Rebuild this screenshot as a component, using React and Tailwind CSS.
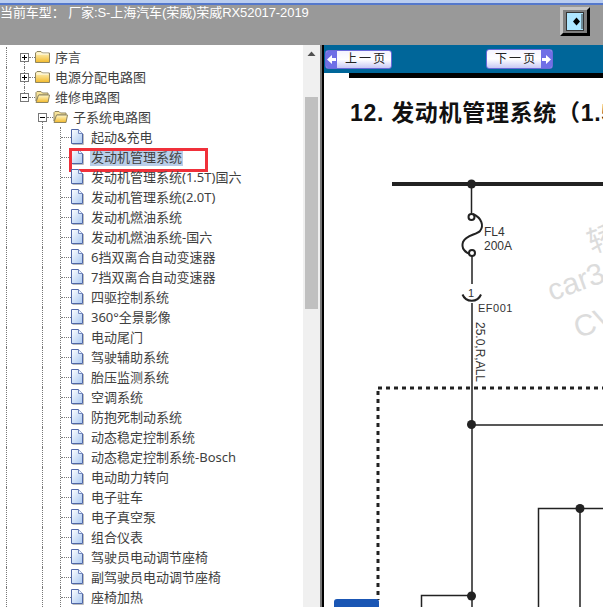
import React from 'react';

const cjk = { fontFamily: '"Noto Sans", "Noto Sans CJK SC", sans-serif' };

const leaves = [
  '起动&充电', '发动机管理系统', '发动机管理系统(1.5T)国六', '发动机管理系统(2.0T)', '发动机燃油系统',
  '发动机燃油系统-国六', '6挡双离合自动变速器', '7挡双离合自动变速器', '四驱控制系统', '360°全景影像',
  '电动尾门', '驾驶辅助系统', '胎压监测系统', '空调系统', '防抱死制动系统', '动态稳定控制系统',
  '动态稳定控制系统-Bosch', '电动助力转向', '电子驻车', '电子真空泵', '组合仪表', '驾驶员电动调节座椅',
  '副驾驶员电动调节座椅', '座椅加热',
];

function FolderIcon({ open }) {
  return (
    <svg width="15" height="14" viewBox="0 0 15 14" className="shrink-0">
      <defs>
        <linearGradient id="fold" x1="0" y1="0" x2="0" y2="1">
          <stop offset="0" stopColor="#fff8cc" />
          <stop offset="1" stopColor="#f2b92a" />
        </linearGradient>
      </defs>
      {open ? (
        <>
          <path d="M1 11V2.5L2 1.5H6L7.5 3H13V5H4L1 11Z" fill="#f8e49a" stroke="#8f8560" />
          <path d="M1 12.5L3.5 5H14.5L13 12.5Z" fill="url(#fold)" stroke="#8f8560" />
        </>
      ) : (
        <>
          <path d="M0.5 3L2 1.5H6L7.5 3H14.5V12.5H0.5Z" fill="url(#fold)" stroke="#8f8560" />
          <path d="M1.5 4H13.5" stroke="#fffdf0" />
        </>
      )}
    </svg>
  );
}

function DocIcon() {
  return (
    <svg width="13" height="16" viewBox="0 0 13 16" className="shrink-0">
      <defs>
        <linearGradient id="doc" x1="0" y1="0" x2="1" y2="1">
          <stop offset="0" stopColor="#ffffff" />
          <stop offset="1" stopColor="#a9c8f2" />
        </linearGradient>
      </defs>
      <path d="M1.5 15.5H12.5V5" fill="none" stroke="#bdbdbd" />
      <path d="M0.5 0.5H7.5L11.5 4.5V14.5H0.5Z" fill="url(#doc)" stroke="#4f66a6" />
      <path d="M7.5 0.5V4.5H11.5" fill="#e8f0fb" stroke="#7487bd" />
    </svg>
  );
}

function Expander({ open, line }) {
  return (
    <span className="relative flex h-full w-[9px] shrink-0 items-center">
      {line === 'both' && <span className="absolute inset-y-0 left-[4px] border-l border-dotted border-[#777]" />}
      {line === 'top' && <span className="absolute left-[4px] top-0 h-1/2 border-l border-dotted border-[#777]" />}
      {line === 'bottom' && <span className="absolute bottom-0 left-[4px] h-1/2 border-l border-dotted border-[#777]" />}
      <span className="relative flex h-[9px] w-[9px] items-center justify-center border border-[#777] bg-white">
        <span className="h-px w-[5px] bg-black" />
        {!open && <span className="absolute h-[5px] w-px bg-black" />}
      </span>
    </span>
  );
}

function FolderRow({ label, open, level, line }) {
  return (
    <div className="flex h-5 items-center pl-[6px]">
      <span className={`h-full shrink-0 border-l border-dotted border-[#777] ${level === 1 ? 'w-[14px]' : 'w-[32px]'}`} />
      <Expander open={open} line={line} />
      <span className="w-[6px] shrink-0 border-t border-dotted border-[#777]" />
      <FolderIcon open={open} />
      <span className="ml-[5px] whitespace-nowrap pb-px text-[13px] leading-[16px] text-[#3f3f3f]">{label}</span>
    </div>
  );
}

function LeafRow({ label, selected }) {
  return (
    <div className="relative flex h-5 items-center pl-[6px]">
      <span className="h-full w-[36px] shrink-0 border-l border-dotted border-[#777]" />
      <span className="h-full w-[18px] shrink-0 border-l border-dotted border-[#777]" />
      <span className="flex h-full w-[11px] shrink-0 items-center border-l border-dotted border-[#777]">
        <span className="w-full border-t border-dotted border-[#777]" />
      </span>
      <DocIcon />
      <span className={`ml-[6px] whitespace-nowrap px-px pb-px text-[13px] leading-[16px] text-[#3f3f3f] ${selected ? 'bg-[#b9cee9]' : ''}`}>
        {label}
      </span>
      {selected && <span className="absolute left-[69px] top-px h-[24px] w-[139px] border-[3px] border-[#f0303a]" />}
    </div>
  );
}

function PageButton({ label, next }) {
  const cap = (
    <span className="flex h-full w-[11px] shrink-0 items-center justify-center bg-[#6f6fe6]">
      <svg width="9" height="9" viewBox="0 0 9 9">
        <path d={next ? 'M0 3H4V0L9 4.5L4 9V6H0Z' : 'M9 3H5V0L0 4.5L5 9V6H9Z'} fill="#fff" />
      </svg>
    </span>
  );
  return (
    <div className={`flex w-[67px] items-center overflow-hidden rounded-[3px] border border-[#6a6ad8] bg-gradient-to-b from-[#f4f4ff] via-white to-[#c8c8f4] ${next ? 'h-[20px]' : 'h-[19px]'}`}>
      {!next && cap}
      <span className={`flex-1 whitespace-nowrap text-[12px] leading-none tracking-[-0.5px] text-[#222] ${next ? 'pl-[8px]' : 'pl-[8px]'}`}>{label}</span>
      {next && cap}
    </div>
  );
}

function Diagram() {
  const txt = { fontFamily: '"Liberation Sans", sans-serif' };
  return (
    <svg width="279" height="462" viewBox="324 145 279 462" className="absolute left-0 top-[72px]">
      <g fill="#dcdcdc" transform="rotate(-20 575 280)" style={txt}>
        <text x="546" y="292" fontSize="30">car3</text>
        <text x="558" y="336" fontSize="30">CV</text>
        <text x="600" y="261" fontSize="30" style={cjk}>轿</text>
      </g>
      <g stroke="#222" fill="none">
        <path d="M392 184H603" strokeWidth="4" />
        <path d="M471.5 184V214M472 256V284M472 303V607M472 425H603M421.5 607V595.5H472M538.5 607V508.5H603M580 508V607" strokeWidth="1.5" />
        <path d="M473 214C482 218 484 226 480 231C476 235 466 235 463 242C461 248 465 253 471 254" strokeWidth="2" />
        <circle cx="471.5" cy="217" r="3" fill="#fff" strokeWidth="2" />
        <circle cx="472" cy="253" r="3" fill="#fff" strokeWidth="2" />
        <path d="M462.5 294.5A10 10 0 0 0 481 294.5" strokeWidth="2" />
        <path d="M378 388H603M378 391V600" strokeWidth="3" strokeDasharray="4 4" />
      </g>
      <g fill="#222">
        <circle cx="471.5" cy="184" r="4.5" />
        <circle cx="471.5" cy="424.5" r="4.5" />
        <circle cx="471.5" cy="596" r="4.5" />
        <circle cx="580" cy="508.5" r="4.5" />
      </g>
      <g fill="#333" fontSize="12" style={txt}>
        <text x="484" y="236">FL4</text>
        <text x="484" y="250">200A</text>
        <text x="478" y="312" fontSize="11" letterSpacing="0.5">EF001</text>
        <text x="468" y="297" fontSize="11">1</text>
        <text transform="translate(476 322) rotate(90)">25.0,R,ALL</text>
      </g>
    </svg>
  );
}

export default function App() {
  return (
    <div className="flex h-[607px] w-[603px] flex-col overflow-hidden bg-white" style={cjk}>
      <div className="h-[3px] bg-[#b9cdf0]" />
      <div className="h-[2px] bg-[#5478cc]" />
      <div className="flex h-[40px] items-start justify-between bg-[#999999]">
        <span className="whitespace-pre text-[13px] leading-[15px] tracking-[-0.08px] text-white" style={{ fontFamily: '"Liberation Sans", "Noto Sans CJK SC", sans-serif' }}>
          当前车型： 厂家:S-上海汽车(荣威)荣威RX52017-2019
        </span>
        <div className="mr-[13px] mt-[2px] flex h-[29px] w-[30px] items-center justify-center border-b-[3px] border-l-[3px] border-r-[3px] border-t-[3px] border-b-black border-l-[#c4c4c4] border-r-black border-t-[#c4c4c4] bg-[#808080]">
          <div className="flex h-[19px] w-[18px] items-center justify-end border border-[#333] bg-[#aee6ff]">
            <svg width="10" height="15" viewBox="0 0 10 15">
              <path d="M3.5 3.5L7 7.5L3.5 11.5L0 7.5Z" fill="#000" />
              <path d="M9 0V15" stroke="#333" />
            </svg>
          </div>
        </div>
      </div>

      <div className="flex min-h-0 flex-1">
        <div className="flex w-[320px] shrink-0">
          <div className="min-w-0 flex-1 overflow-hidden pt-[2px]">
            <FolderRow label="序言" level={1} line="bottom" />
            <FolderRow label="电源分配电路图" level={1} line="both" />
            <FolderRow label="维修电路图" open level={1} line="top" />
            <FolderRow label="子系统电路图" open level={2} line="bottom" />
            {leaves.map((l, i) => (
              <LeafRow key={l} label={l} selected={i === 1} />
            ))}
          </div>
          <div className="flex w-[17px] shrink-0 flex-col bg-[#f0f0f0] pl-[2px]">
            <svg width="13" height="52" viewBox="0 0 13 52" className="shrink-0">
              <path d="M2.5 11L6.5 6.5L10.5 11Z" fill="#505050" />
            </svg>
            <div className="h-[212px] w-[13px] bg-[#c0c0c0]" />
          </div>
        </div>

        <div className="relative flex min-w-0 flex-1 flex-col overflow-hidden border-l-2 border-[#777]">
          <div className="flex-1 overflow-hidden border-l-2 border-black">
            <div className="flex h-[28px] items-center gap-[94px] bg-[#006699] pl-px">
              <PageButton label="上 一 页" />
              <PageButton label="下 一 页" next />
            </div>
            <div className="relative">
              <div className="ml-[25px] h-[5px] bg-black" />
              <h1 className="ml-[26px] mt-[21px] whitespace-nowrap text-[23px] font-bold leading-[28px] tracking-[0.7px] text-[#111]" style={{ fontFamily: '"Liberation Sans", "Noto Sans CJK SC", sans-serif' }}>
                12. 发动机管理系统（1.5T）
              </h1>
              <Diagram />
              <div className="absolute left-[10px] top-[526px] h-[20px] w-[45px] rounded-t-[3px] bg-[#1a56b4]" />
            </div>
          </div>
        </div>
      </div>
    </div>
  );
}
